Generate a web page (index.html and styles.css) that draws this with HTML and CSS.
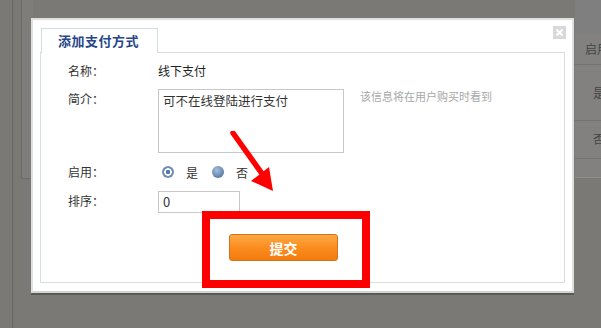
FILE: index.html
```html
<!DOCTYPE html>
<html lang="zh">
<head>
<meta charset="utf-8">
<link rel="stylesheet" href="styles.css">
</head>
<body>
<div class="page">
  <div class="vline"></div>
  <div class="leftpanel"></div>
  <div class="spacer"></div>
  <div class="table">
    <div class="trow thead">启用</div>
    <div class="trow t1">是</div>
    <div class="trow t2">否</div>
  </div>
</div>

<div class="modal">
  <span class="close">
    <svg width="13" height="13" viewBox="0 0 13 13"><path d="M3.5 3.5 L9.5 9.5 M9.5 3.5 L3.5 9.5" stroke="#fff" stroke-width="2.2"/></svg>
  </span>
  <div class="tab">添加支付方式</div>
  <div class="box">
    <div class="row r1">
      <span class="label">名称：</span>
      <span class="value">线下支付</span>
    </div>
    <div class="row r2">
      <span class="label">简介：</span>
      <div class="textarea">可不在线登陆进行支付</div>
      <span class="hint">该信息将在用户购买时看到</span>
    </div>
    <div class="row r3">
      <span class="label">启用：</span>
      <span class="radio on"></span><span class="opt">是</span>
      <span class="radio"></span><span class="opt">否</span>
    </div>
    <div class="row r4">
      <span class="label">排序：</span>
      <div class="input">0</div>
    </div>
    <div class="row r5">
      <button class="submit">提交</button>
    </div>
  </div>
</div>

<div class="highlight"></div>
<svg class="arrow" width="60" height="70" viewBox="0 0 60 70">
  <line x1="4" y1="2" x2="34" y2="44" stroke="#f00" stroke-width="5.5" stroke-linecap="round"/>
  <polygon points="22,50 40,36 44,60" fill="#f00"/>
</svg>
</body>
</html>
```

FILE: styles.css
```css
* { box-sizing: border-box; }
html, body { margin: 0; padding: 0; }
body {
  width: 601px;
  height: 328px;
  overflow: hidden;
  background: #7b7975;
  font-family: "Noto Sans CJK SC", "Noto Sans", sans-serif;
  position: relative;
}
.page {
  display: flex;
  height: 328px;
}
.vline {
  margin-left: 12px;
  width: 1px;
  background: #6a6864;
}
.leftpanel {
  margin-left: 8px;
  width: 12px;
  height: 179px;
  background: #7f7d7a;
  border-left: 1px solid #6d6b68;
  border-bottom: 1px solid #6d6b68;
}
.spacer { flex: 1; }
.table {
  width: 26px;
  height: 178px;
  background: #83817f;
  border-bottom: 1px solid #908e8c;
  font-size: 12px;
  color: #444;
}
.trow {
  border-bottom: 1px solid #75736f;
  overflow: hidden;
  white-space: nowrap;
}
.thead { height: 65px; padding: 34px 0 0 10px; line-height: 30px; background: linear-gradient(#7f7f7f 0 33px, #83817f 33px); }
.t1 { height: 56px; line-height: 56px; padding-left: 18px; }
.t2 { height: 38px; line-height: 36px; padding-left: 18px; }

.modal {
  position: absolute;
  left: 31px;
  top: 18px;
  width: 543px;
  height: 275px;
  background: #fff;
  border: 2px solid #dedfe0;
  border-bottom: 2px solid #d2d4d6;
  box-shadow: 0 2px 0 #5a5956;
  padding: 8px 7px 7px 7px;
}
.close {
  position: absolute;
  right: 6px;
  top: 6px;
  width: 13px;
  height: 13px;
  background: #d7d8d9;
  display: block;
}
.close svg { display: block; }
.tab {
  margin-left: 1px;
  width: 117px;
  height: 25px;
  border: 1px solid #d3dbe3;
  border-bottom: none;
  background: #fff;
  color: #27468a;
  font-weight: bold;
  font-size: 13px;
  letter-spacing: 0.5px;
  line-height: 24px;
  padding-left: 16px;
  position: relative;
  z-index: 1;
  margin-bottom: -1px;
}
.box {
  height: 231px;
  border: 1px solid #d7dde3;
  padding: 0 0 0 27px;
}
.row {
  display: flex;
  align-items: flex-start;
  font-size: 12px;
  color: #333;
}
.label {
  width: 90px;
  line-height: 20px;
  flex: none;
}
.r1 { margin-top: 8px; }
.r1 .value { line-height: 20px; color: #222; }
.r2 { margin-top: 8px; }
.textarea {
  width: 186px;
  height: 64px;
  border: 1px solid #c8c8c8;
  font-size: 12.5px;
  line-height: 18px;
  padding: 2px 4px;
  color: #333;
}
.hint {
  margin-left: 16px;
  font-size: 11px;
  line-height: 14px;
  color: #a8a8a8;
}
.r3 { margin-top: 9px; align-items: center; height: 20px; }
.radio {
  width: 12px;
  height: 12px;
  border-radius: 50%;
  margin-left: 4px;
  background: radial-gradient(circle at 40% 35%, #a9bfdc, #5c7eaa 70%, #4a6a96);
  flex: none;
}
.radio.on {
  background: radial-gradient(circle, #5776a2 0 2px, #fff 2.5px 3.5px, #6f8fb8 4px);
}
.opt { margin-left: 12px; margin-right: 10px; }
.r4 { margin-top: 9px; }
.input {
  width: 82px;
  height: 22px;
  border: 1px solid #c8c8c8;
  font-size: 13px;
  line-height: 20px;
  padding-left: 4px;
  color: #333;
}
.r5 { margin-top: 21px; padding-left: 161px; }
.submit {
  width: 109px;
  height: 27px;
  border: 1px solid #d0751c;
  border-radius: 3px;
  background: linear-gradient(#ffa844, #fb8a1c 55%, #f27c10);
  color: #fff;
  font-family: "Noto Sans CJK SC", sans-serif;
  font-weight: bold;
  font-size: 14px;
  padding: 0;
}
.highlight {
  position: absolute;
  left: 202px;
  top: 211px;
  width: 168px;
  height: 77px;
  border: 8px solid #ff0000;
}
.arrow {
  position: absolute;
  left: 229px;
  top: 131px;
}
```
